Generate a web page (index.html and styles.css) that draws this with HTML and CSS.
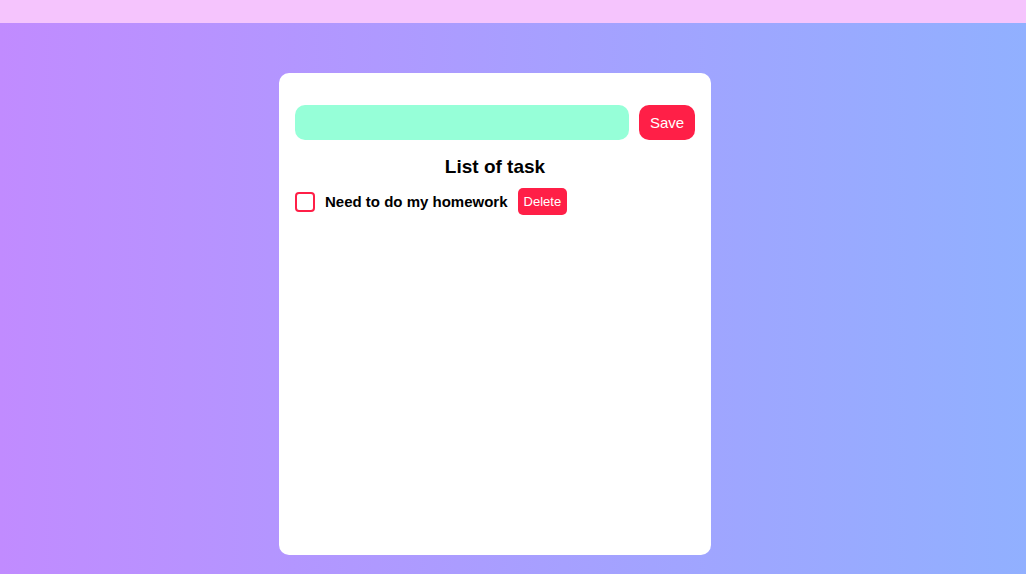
FILE: index.html
```html
<!DOCTYPE html>
<html>
<head>
<meta charset="utf-8">
<link rel="stylesheet" href="styles.css">
</head>
<body>
<div class="topbar"></div>
<main class="stage">
  <section class="card">
    <div class="form-row">
      <input class="task-input" type="text">
      <button class="btn save-btn">Save</button>
    </div>
    <h2 class="title">List of task</h2>
    <ul class="tasks">
      <li class="task">
        <span class="checkbox"></span>
        <span class="task-text">Need to do my homework</span>
        <button class="btn delete-btn">Delete</button>
      </li>
    </ul>
  </section>
</main>
</body>
</html>
```
FILE: styles.css
```css
* { box-sizing: border-box; }
html, body { margin: 0; height: 100%; }
body {
  font-family: "Liberation Sans", Arial, sans-serif;
  display: flex;
  flex-direction: column;
  background: linear-gradient(90deg, #c18bff 0%, #a6a0ff 55%, #91b0ff 100%);
}
.topbar {
  height: 23px;
  background: #f5c4fd;
  flex: none;
}
.stage {
  flex: 1;
  display: flex;
  justify-content: flex-start;
  padding-top: 50px;
  padding-left: 279px;
}
.card {
  width: 432px;
  height: 482px;
  background: #fff;
  border-radius: 10px;
  padding: 32px 16px 16px 16px;
}
.form-row {
  display: flex;
  gap: 10px;
}
.task-input {
  flex: 1;
  height: 35px;
  border: none;
  border-radius: 10px;
  background: #96ffd8;
  outline: none;
}
.btn {
  border: none;
  background: #ff1f47;
  color: #fff;
  font-family: "Liberation Sans", Arial, sans-serif;
}
.save-btn {
  width: 56px;
  height: 35px;
  border-radius: 10px;
  font-size: 15px;
}
.title {
  margin: 17px 0 0 0;
  text-align: center;
  font-size: 19px;
  line-height: 20px;
  font-weight: bold;
  color: #000;
}
.tasks {
  list-style: none;
  margin: 11px 0 0 0;
  padding: 0;
}
.task {
  display: flex;
  align-items: center;
  height: 27px;
}
.checkbox {
  width: 20px;
  height: 20px;
  border: 2px solid #ff1f47;
  border-radius: 4px;
  margin-right: 10px;
}
.task-text {
  font-size: 15px;
  font-weight: bold;
  color: #000;
  margin-right: 10px;
}
.delete-btn {
  height: 27px;
  padding: 0 6px;
  border-radius: 5px;
  font-size: 13px;
}
```
